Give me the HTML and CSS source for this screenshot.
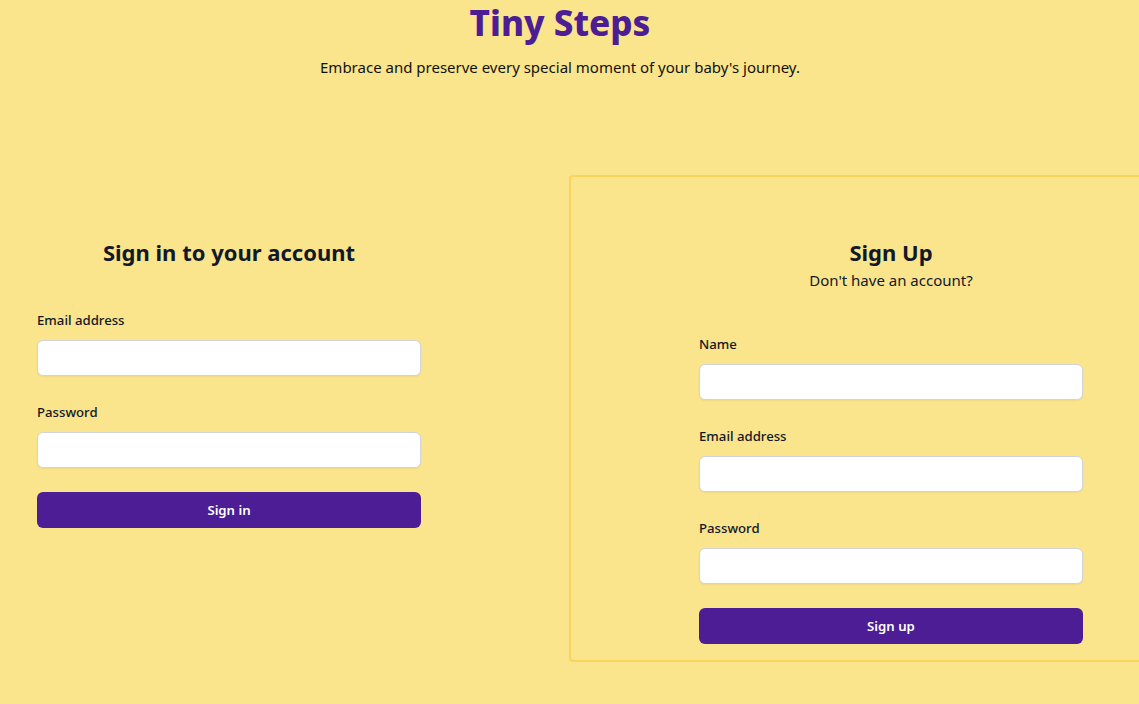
FILE: index.html
```html
<!DOCTYPE html>
<html lang="en">
<head>
<meta charset="utf-8">
<title>Tiny Steps</title>
<link rel="stylesheet" href="styles.css">
</head>
<body>
<header class="hero">
  <h1 class="brand">Tiny Steps</h1>
  <p class="tagline">Embrace and preserve every special moment of your baby's journey.</p>
</header>
<main class="panels">
  <section class="panel panel-signin">
    <h2 class="panel-title">Sign in to your account</h2>
    <form class="form">
      <div class="field">
        <label class="label" for="si-email">Email address</label>
        <input class="input" id="si-email" type="email">
      </div>
      <div class="field">
        <label class="label" for="si-pass">Password</label>
        <input class="input" id="si-pass" type="password">
      </div>
      <button class="btn" type="button">Sign in</button>
    </form>
  </section>
  <section class="panel panel-signup">
    <h2 class="panel-title">Sign Up</h2>
    <p class="panel-sub">Don't have an account?</p>
    <form class="form">
      <div class="field">
        <label class="label" for="su-name">Name</label>
        <input class="input" id="su-name" type="text">
      </div>
      <div class="field">
        <label class="label" for="su-email">Email address</label>
        <input class="input" id="su-email" type="email">
      </div>
      <div class="field">
        <label class="label" for="su-pass">Password</label>
        <input class="input" id="su-pass" type="password">
      </div>
      <button class="btn" type="button">Sign up</button>
    </form>
  </section>
</main>
</body>
</html>
```
FILE: styles.css
```css
html { overflow-x: hidden; }
* { box-sizing: border-box; }
body {
  margin: 0;
  background: #fae48c;
  font-family: "Noto Sans", "Open Sans", sans-serif;
  color: #111827;
  min-height: 704px;
}
.hero {
  width: 1120px;
  padding-top: 3px;
  text-align: center;
}
.brand {
  margin: 0;
  font-size: 35px;
  line-height: 40px;
  font-weight: 800;
  color: #4c1d95;
}
.tagline {
  margin: 12px 0 0;
  font-size: 15px;
  line-height: 24px;
  color: #111;
}
.panels {
  display: flex;
  align-items: flex-start;
  margin-top: 96px;
  width: 1213px;
}
.panel {
  padding: 59px 0 16px;
  display: flex;
  flex-direction: column;
  align-items: center;
}
.panel-signin {
  width: 458px;
  border: 2px solid transparent;
}
.panel-signup {
  margin-left: 111px;
  width: 644px;
  border: 2px solid #fad35b;
  border-radius: 4px;
}
.panel-title {
  margin: 0;
  font-size: 22px;
  line-height: 32px;
  font-weight: 700;
  color: #111827;
  text-align: center;
}
.panel-sub {
  margin: 0;
  font-size: 15px;
  line-height: 24px;
  text-align: center;
}
.form {
  width: 384px;
  margin-top: 40px;
  display: flex;
  flex-direction: column;
  gap: 24px;
}
.field {
  display: flex;
  flex-direction: column;
  gap: 8px;
}
.label {
  font-size: 13.2px;
  line-height: 24px;
  font-weight: 500;
  color: #111827;
}
.input {
  height: 36px;
  border: 1px solid #d1d5db;
  border-radius: 6px;
  background: #fff;
  box-shadow: 0 1px 2px rgba(0,0,0,0.05);
  font: inherit;
  padding: 0 12px;
}
.btn {
  height: 36px;
  border: 0;
  border-radius: 6px;
  background: #4c1d95;
  color: #fff;
  font: inherit;
  font-size: 13.2px;
  font-weight: 600;
  line-height: 24px;
}
```
